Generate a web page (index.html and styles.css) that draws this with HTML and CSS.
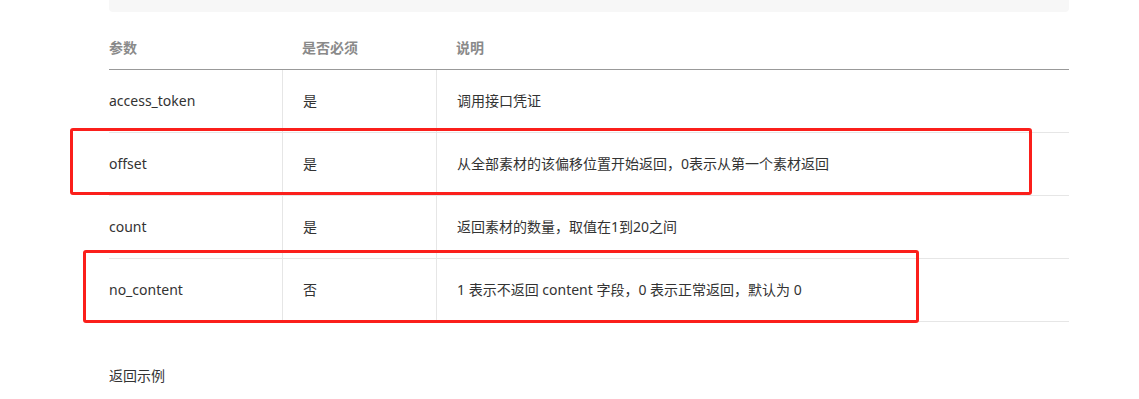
FILE: index.html
```html
<!DOCTYPE html>
<html lang="zh-CN">
<head>
<meta charset="utf-8">
<title>参数说明</title>
<link rel="stylesheet" href="styles.css">
</head>
<body>
<div class="page">
  <div class="code-tail"></div>
  <table class="params">
    <colgroup>
      <col class="c-name">
      <col class="c-req">
      <col class="c-desc">
    </colgroup>
    <thead>
      <tr><th>参数</th><th>是否必须</th><th>说明</th></tr>
    </thead>
    <tbody>
      <tr><td>access_token</td><td>是</td><td>调用接口凭证</td></tr>
      <tr><td>offset</td><td>是</td><td>从全部素材的该偏移位置开始返回，0表示从第一个素材返回</td></tr>
      <tr><td>count</td><td>是</td><td>返回素材的数量，取值在1到20之间</td></tr>
      <tr><td>no_content</td><td>否</td><td>1 表示不返回 content 字段，0 表示正常返回，默认为 0</td></tr>
    </tbody>
  </table>
  <p class="section">返回示例</p>
</div>
<div class="mark mark-1"></div>
<div class="mark mark-2"></div>
</body>
</html>
```

FILE: styles.css
```css
html, body {
  margin: 0;
  padding: 0;
  background: #fff;
}
body {
  font-family: "Noto Sans", "Noto Sans CJK SC", sans-serif;
  font-size: 14px;
  color: #333;
  position: relative;
  width: 1139px;
  height: 399px;
  overflow: hidden;
}
.page {
  margin-left: 109px;
  width: 960px;
}
.code-tail {
  height: 12px;
  background: #f7f7f7;
  border-radius: 0 0 4px 4px;
}
.params {
  margin-top: 16px;
  width: 960px;
  table-layout: fixed;
  border-collapse: separate;
  border-spacing: 0;
}
.c-name { width: 173px; }
.c-req { width: 154px; }
.c-desc { width: 633px; }
.params th {
  text-align: left;
  font-weight: bold;
  color: #8a8a8a;
  line-height: 20px;
  padding: 10px 20px 11px;
  border-bottom: 1px solid #999;
}
.params td {
  line-height: 20px;
  padding: 21px 20px;
  border-bottom: 1px solid #e6e6e6;
  white-space: nowrap;
}
.params th:first-child,
.params td:first-child {
  padding-left: 0;
}
.params td + td {
  border-left: 1px solid #e6e6e6;
}
.section {
  margin: 43px 0 0;
  line-height: 22px;
  color: #333;
}
.mark {
  position: absolute;
  border: 3px solid #fb1f1b;
  border-radius: 3px;
  box-sizing: border-box;
}
.mark-1 {
  left: 70px;
  top: 128px;
  width: 962px;
  height: 67px;
}
.mark-2 {
  left: 83px;
  top: 250px;
  width: 836px;
  height: 73px;
}
```
